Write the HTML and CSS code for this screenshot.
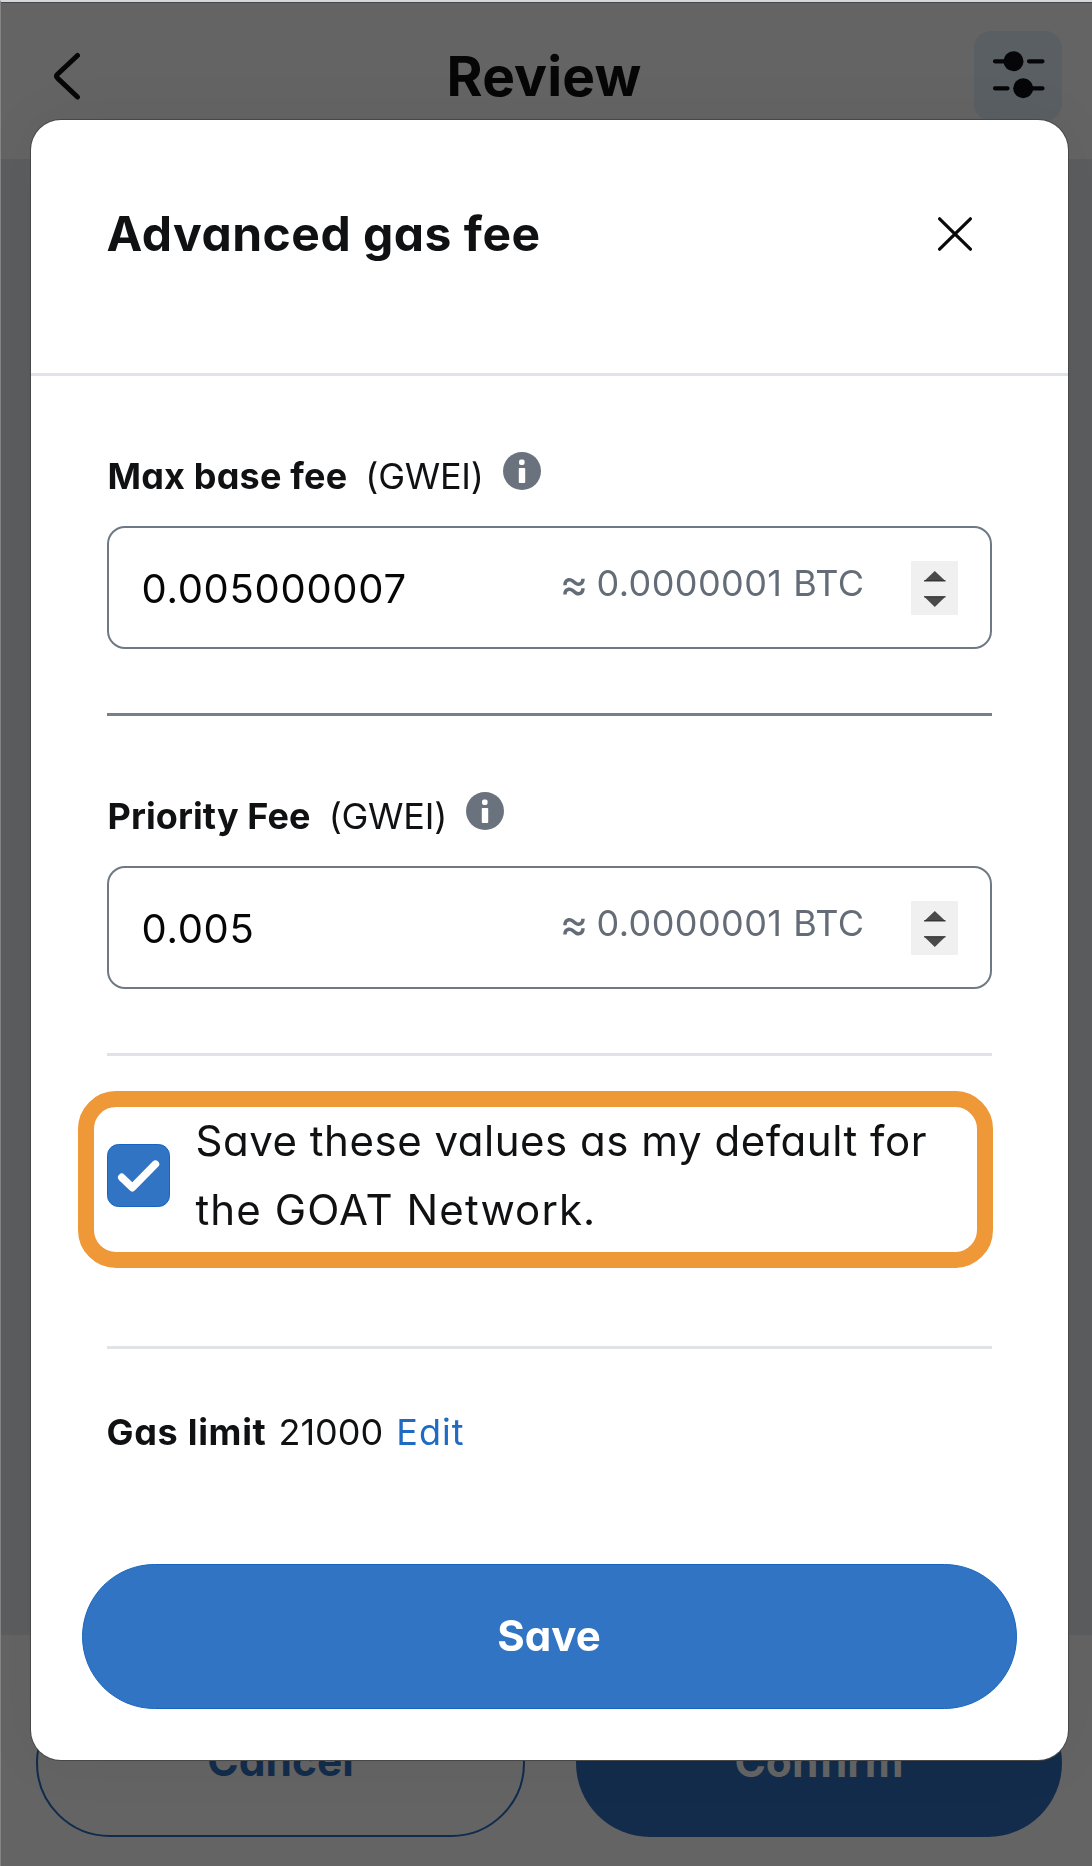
FILE: index.html
```
<!DOCTYPE html>
<html lang="en">
<head>
<meta charset="utf-8">
<title>Advanced gas fee</title>
<link rel="stylesheet" href="styles.css">
</head>
<body>
<div class="page">
  <header class="page-header">
    <svg class="back" viewBox="0 0 30 48" width="30" height="48"><path d="M25.5 3.5 5.5 22.3Q3.6 24.2 5.5 26.1L25.5 45" fill="none" stroke="#060606" stroke-width="5" stroke-linecap="round" stroke-linejoin="round"/></svg>
    <h1 class="page-title">Review</h1>
    <div class="settings">
      <svg viewBox="0 0 88 90" width="88" height="90"><g stroke="#060608" stroke-width="4.2" stroke-linecap="round"><path d="M21 30.3H39M55 30.3H68.5M21 57.3H33.5M49 57.3H68.5"/></g><circle cx="39.5" cy="30.3" r="10" fill="#060608"/><circle cx="49.2" cy="57.3" r="10" fill="#060608"/></svg>
    </div>
  </header>
  <main class="page-main"></main>
  <footer class="page-footer">
    <div class="btn btn-cancel">Cancel</div>
    <div class="btn btn-confirm">Confirm</div>
  </footer>
</div>

<div class="overlay">
  <section class="dialog">
    <header class="dialog-header">
      <h2 class="dialog-title">Advanced gas fee</h2>
      <svg class="close" viewBox="0 0 36 36" width="36" height="36"><path d="M2.6 2.8 33.4 33.2M33.4 2.8 2.6 33.2" stroke="#0a0a0a" stroke-width="3.2" stroke-linecap="round"/></svg>
    </header>
    <div class="dialog-body">
      <div class="label label-max">
        <b>Max base fee</b><span class="unit">(GWEI)</span>
        <svg class="info" viewBox="0 0 38 38" width="38" height="38"><circle cx="19" cy="19" r="19" fill="#6a737d"/><rect x="16" y="7.6" width="5.6" height="5.4" rx="2" fill="#fff"/><rect x="15.8" y="16" width="6.4" height="15" rx=".8" fill="#fff"/></svg>
      </div>
      <div class="field">
        <span class="value">0.005000007</span>
        <span class="fiat"><span class="approx">≈</span><span class="amount">0.0000001</span><span>BTC</span></span>
        <svg class="spinner" viewBox="0 0 47 54" width="47" height="54"><rect width="47" height="54" fill="#f0f0f0"/><path d="M13 20.3 23.8 10 34.6 20.3zM13 35.4H34.6L23.8 46z" fill="#4a4a4a"/><path d="M13 19.8H34.6M13 35.8H34.6" stroke="#2b2b2b"/></svg>
      </div>
      <hr class="rule rule-dark">
      <div class="label label-priority">
        <b>Priority Fee</b><span class="unit">(GWEI)</span>
        <svg class="info" viewBox="0 0 38 38" width="38" height="38"><circle cx="19" cy="19" r="19" fill="#6a737d"/><rect x="16" y="7.6" width="5.6" height="5.4" rx="2" fill="#fff"/><rect x="15.8" y="16" width="6.4" height="15" rx=".8" fill="#fff"/></svg>
      </div>
      <div class="field">
        <span class="value">0.005</span>
        <span class="fiat"><span class="approx">≈</span><span class="amount">0.0000001</span><span>BTC</span></span>
        <svg class="spinner" viewBox="0 0 47 54" width="47" height="54"><rect width="47" height="54" fill="#f0f0f0"/><path d="M13 20.3 23.8 10 34.6 20.3zM13 35.4H34.6L23.8 46z" fill="#4a4a4a"/><path d="M13 19.8H34.6M13 35.8H34.6" stroke="#2b2b2b"/></svg>
      </div>
      <hr class="rule">
      <div class="highlight">
        <svg class="check" viewBox="0 0 63 63" width="63" height="63"><rect x=".5" y=".5" width="62" height="62" rx="11" fill="#3274c4" stroke="#1565c0"/><path d="M14.8 33.4 25.3 43.6 48.4 20.2" fill="none" stroke="#fff" stroke-width="7.6" stroke-linecap="round" stroke-linejoin="round"/></svg>
        <p class="highlight-text">Save these values as my default for<br><span class="line-two">the GOAT Network.</span></p>
      </div>
      <hr class="rule rule-last">
      <div class="gas">
        <b>Gas limit</b><span class="gas-value">21000</span><a class="edit">Edit</a>
      </div>
      <div class="save">Save</div>
    </div>
  </section>
</div>
</body>
</html>
```
FILE: styles.css
```
* { box-sizing: border-box; }

body {
  margin: 0;
  font-family: Inter, "Liberation Sans", sans-serif;
  font-feature-settings: "cv11";
  color: #101113;
}

h1, h2, p { margin: 0; }

.page {
  height: 1866px;
  display: flex;
  flex-direction: column;
  background: #646464;
  border-top: 2px solid #d4d8da;
  border-left: 1px solid #858585;
}

.page-header {
  height: 157px;
  display: flex;
  align-items: flex-start;
  justify-content: space-between;
  padding: 28px 30px 0 51px;
  border-top: 1px solid #484848;
}

.back { margin-top: 21px; }

.page-title {
  margin: 13px 0 0 32px;
  font-size: 55px;
  line-height: 64px;
  letter-spacing: 0.18px;
  color: #060606;
}

.settings {
  width: 88px;
  height: 90px;
  border-radius: 17px;
  background: #5a5f63;
}

.settings svg { display: block; }

.page-main {
  flex: 1;
  background: #5c5d5f;
}

.page-footer {
  height: 231px;
  display: flex;
  align-items: flex-start;
  gap: 51px;
  padding: 54px 30px 0 35px;
}

.btn {
  height: 148px;
  border-radius: 74px;
  font-size: 42.5px;
  font-weight: 700;
  line-height: 145px;
  text-align: center;
}

.btn-cancel {
  width: 489px;
  border: 2.5px solid #0f2b4d;
  color: #132c4b;
  line-height: 140px;
}

.btn-confirm {
  flex: 1;
  background: #132c4b;
  color: #646464;
}

.overlay {
  position: fixed;
  inset: 0;
  padding: 120px 24.5px 0 30.5px;
}

.dialog {
  height: 1640px;
  border-radius: 30px;
  background: #fff;
  box-shadow: 0 0 0 1px #484848, 0 0 60px rgba(0, 0, 0, 0.05);
}

.dialog-header {
  height: 256px;
  display: flex;
  justify-content: space-between;
  align-items: flex-start;
  padding: 81px 95px 0 76px;
  border-bottom: 3px solid #e0e4e8;
}

.dialog-title {
  margin-top: 1px;
  font-size: 48px;
  line-height: 64px;
  letter-spacing: 0.5px;
}

.close { margin-top: 15px; }

.dialog-body { padding: 77px 76px 0; }

.label, .gas {
  display: flex;
  height: 46px;
  font-size: 36px;
  line-height: 47px;
}

.label b { margin-left: 1px; }
.label-max b { letter-spacing: 0.18px; }
.label-priority b { letter-spacing: 0.1px; }

.unit {
  margin-left: 18px;
  letter-spacing: -0.25px;
}

.info {
  margin: -1px 0 0 19px;
}

.field {
  display: flex;
  align-items: center;
  height: 123px;
  margin-top: 27px;
  padding: 0 32px 0 33px;
  border: 2.5px solid #6f7985;
  border-radius: 18px;
}

.value {
  flex: 1;
  padding-top: 1px;
  font-size: 40px;
  letter-spacing: 0.7px;
  color: #060606;
}

.fiat {
  display: flex;
  padding-bottom: 9px;
  font-size: 36px;
  line-height: 44px;
  letter-spacing: 0.4px;
  color: #646d77;
}

.approx {
  margin-right: 8px;
  font-size: 43px;
}

.amount { margin-right: 11px; }
.spinner { margin-left: 46px; }

.rule {
  height: 3px;
  margin: 64px 0 0;
  border: 0;
  background: #e1e2e7;
}

.rule-dark {
  background: #75808b;
  margin-bottom: 77px;
}

.highlight {
  display: flex;
  align-items: flex-start;
  gap: 26px;
  height: 177px;
  margin: 35px -1px 0 -29px;
  padding-left: 13px;
  border: 16px solid #ef9838;
  border-radius: 38px;
}

.check {
  flex: none;
  margin-top: 37px;
}

.highlight-text {
  margin-top: -1px;
  font-size: 42px;
  line-height: 69px;
  letter-spacing: 0.52px;
  white-space: nowrap;
}

.line-two { letter-spacing: 1.1px; }

.rule-last {
  margin: 78px 0 60px;
  background: #dfe4e8;
}

.gas b { letter-spacing: 0.7px; }
.gas-value { margin-left: 12px; }

.edit {
  margin-left: 13px;
  letter-spacing: 1px;
  color: #1f6bc4;
}

.save {
  height: 145px;
  margin: 109px -25px 0;
  border: 1px solid #1565c0;
  border-radius: 73px;
  background: #3274c4;
  color: #fff;
  font-size: 42px;
  font-weight: 700;
  line-height: 141px;
  text-align: center;
}
```
